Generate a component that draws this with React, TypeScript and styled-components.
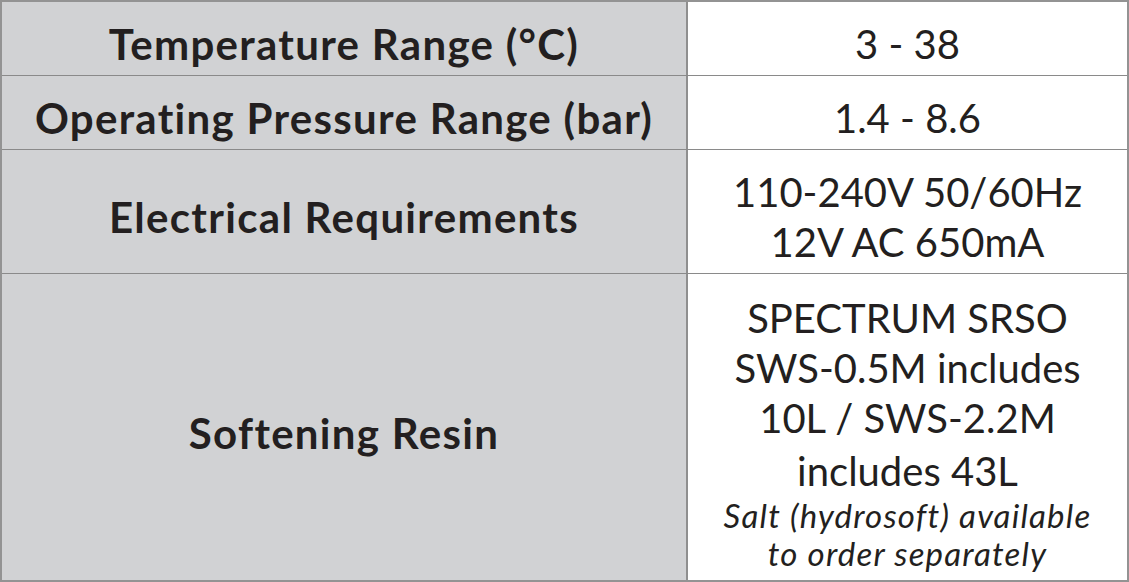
import React from "react";
import styled, { createGlobalStyle } from "styled-components";

const Global = createGlobalStyle`
  html, body { margin: 0; padding: 0; background: #ffffff; }
  body { font-family: Lato, "Noto Sans", sans-serif; color: #231f20; }
`;

const Table = styled.div`
  box-sizing: border-box;
  width: 1129px;
  height: 582px;
  border: 2px solid #939393;
  display: grid;
  grid-template-rows: 74px 74px 124px 1fr;
  background: #ffffff;
`;

const Row = styled.div<{ $last?: boolean }>`
  display: grid;
  grid-template-columns: 686px 1fr;
  border-bottom: ${(p) => (p.$last ? "none" : "1px solid #8a8a8a")};
`;

const Label = styled.div`
  background: #d1d2d4;
  border-right: 2px solid #8f8f8f;
  display: flex;
  align-items: center;
  justify-content: center;
  padding-top: 11px;
  font-weight: 700;
  font-size: 42px;
  line-height: 50px;
  letter-spacing: 1.3px;
  white-space: nowrap;
`;

const Value = styled.div`
  display: flex;
  flex-direction: column;
  align-items: center;
  justify-content: center;
  padding-top: 11px;
  font-size: 40px;
  line-height: 50px;
  text-align: center;
  white-space: nowrap;
`;

const Line = styled.span<{ $gap?: number }>`
  display: block;
  margin-top: ${(p) => p.$gap ?? 0}px;
`;

const Note = styled.span`
  display: block;
  font-style: italic;
  font-size: 33px;
  line-height: 38px;
  letter-spacing: 1.2px;
`;

export default function App() {
  return (
    <>
      <Global />
      <Table>
        <Row>
          <Label>Temperature Range (°C)</Label>
          <Value>3 - 38</Value>
        </Row>
        <Row>
          <Label>Operating Pressure Range (bar)</Label>
          <Value>1.4 - 8.6</Value>
        </Row>
        <Row>
          <Label>Electrical Requirements</Label>
          <Value>
            <Line>110-240V 50/60Hz</Line>
            <Line>12V AC 650mA</Line>
          </Value>
        </Row>
        <Row $last>
          <Label>Softening Resin</Label>
          <Value>
            <Line>SPECTRUM SRSO</Line>
            <Line>SWS-0.5M includes</Line>
            <Line>10L / SWS-2.2M</Line>
            <Line $gap={3}>includes 43L</Line>
            <Note>Salt (hydrosoft) available</Note>
            <Note>to order separately</Note>
          </Value>
        </Row>
      </Table>
    </>
  );
}
